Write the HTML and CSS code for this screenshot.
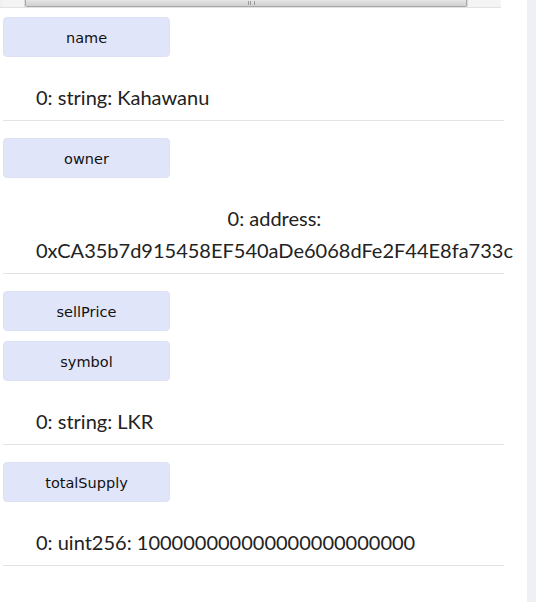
FILE: index.html
```html
<!DOCTYPE html>
<html>
<head>
<meta charset="utf-8">
<link rel="stylesheet" href="styles.css">
</head>
<body>
<div class="main">
  <div class="hscroll">
    <div class="hs-btn hs-left"></div>
    <div class="hs-thumb"><span class="grip"></span></div>
    <div class="hs-btn hs-right"></div>
  </div>
  <div class="fns">
    <div class="fn">
      <button class="btn">name</button>
      <div class="result"><div class="val">0: string: Kahawanu</div></div>
      <div class="rule"></div>
    </div>
    <div class="fn">
      <button class="btn">owner</button>
      <div class="result"><div class="val"><span class="ln">0: address:</span><span class="ln">0xCA35b7d915458EF540aDe6068dFe2F44E8fa733c</span></div></div>
      <div class="rule"></div>
    </div>
    <div class="fn">
      <button class="btn">sellPrice</button>
    </div>
    <div class="fn">
      <button class="btn">symbol</button>
      <div class="result"><div class="val">0: string: LKR</div></div>
      <div class="rule"></div>
    </div>
    <div class="fn">
      <button class="btn">totalSupply</button>
      <div class="result"><div class="val">0: uint256: 100000000000000000000000</div></div>
      <div class="rule"></div>
    </div>
  </div>
</div>
<div class="vscroll"></div>
</body>
</html>
```
FILE: styles.css
```css
html, body {
  margin: 0;
  padding: 0;
  background: #ffffff;
}
body {
  display: flex;
  height: 602px;
  overflow: hidden;
}
.main {
  flex: 1;
  padding-left: 3px;
  min-width: 0;
}
.hscroll {
  display: flex;
  width: 501px;
  height: 8px;
  margin-left: -3px;
  padding-left: 3px;
  background: #f1f1f1;
  border-bottom: 1px solid #e2e2e2;
  box-sizing: border-box;
}
.hs-btn {
  height: 7px;
  background: #f4f4f4;
  border-right: 1px solid #dcdcdc;
}
.hs-left {
  width: 21px;
}
.hs-right {
  width: 33px;
  border-right: none;
  border-left: 1px solid #dcdcdc;
}
.hs-thumb {
  flex: 1;
  height: 7px;
  background: linear-gradient(#e6e6e6, #cfcfcf);
  border: 1px solid #a9a9a9;
  border-top: none;
  border-radius: 0 0 2px 2px;
  display: flex;
  justify-content: center;
  box-sizing: border-box;
  padding-left: 10px;
}
.grip {
  width: 5px;
  height: 4px;
  border-left: 1px solid #9a9a9a;
  border-right: 1px solid #9a9a9a;
  background: linear-gradient(90deg, transparent 1px, #9a9a9a 1px, #9a9a9a 2px, transparent 2px);
  margin-top: 1px;
}
.fns {
  display: flex;
  flex-direction: column;
  padding-top: 4px;
}
.fn {
  display: flex;
  flex-direction: column;
  align-items: flex-start;
}
.btn {
  display: block;
  width: 167px;
  height: 40px;
  margin: 5px 0;
  padding: 2px 0 0;
  background: #e1e5f9;
  border: 1px solid #dde1f4;
  border-radius: 4px;
  font-family: "DejaVu Sans", sans-serif;
  font-size: 14.5px;
  color: #111111;
  text-align: center;
}
.result {
  padding: 19px 0 7px 33px;
}
.val {
  display: inline-block;
  text-align: center;
  font-family: Lato, "Open Sans", sans-serif;
  font-size: 20px;
  line-height: 32px;
  color: #222222;
  white-space: nowrap;
}
.ln {
  display: block;
}
.rule {
  width: 501px;
  height: 1px;
  background: #e3e3e3;
  margin-bottom: 12px;
}
.vscroll {
  flex: 0 0 9px;
  height: 602px;
  background: #eef0f5;
}
```
